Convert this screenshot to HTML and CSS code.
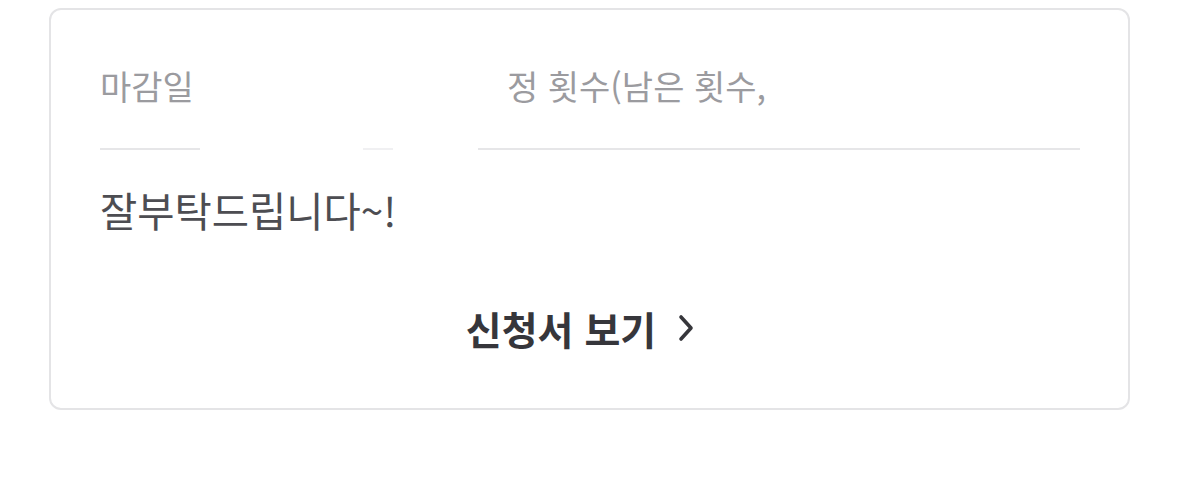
FILE: index.html
```html
<!DOCTYPE html>
<html lang="ko">
<head>
<meta charset="utf-8">
<title>신청서</title>
<link rel="stylesheet" href="styles.css">
</head>
<body>
<div class="card">
  <div class="labels">
    <div class="label label-first">마감일</div>
    <div class="label label-second">정 횟수(남은 횟수,</div>
  </div>
  <div class="divider"></div>
  <p class="message">잘부탁드립니다~!</p>
  <a class="view-link" href="#">신청서 보기 <svg class="chev" viewBox="0 0 16 28" width="16" height="28" aria-hidden="true"><path d="M3 3 L13 14 L3 25" fill="none" stroke="currentColor" stroke-width="3.6" stroke-linecap="round" stroke-linejoin="round"/></svg></a>
</div>
</body>
</html>
```
FILE: styles.css
```css
html, body {
  margin: 0;
  padding: 0;
  background: #ffffff;
}
body {
  font-family: "Noto Sans CJK KR", "Noto Sans", sans-serif;
  padding-top: 8px;
}
.card {
  box-sizing: border-box;
  margin-left: 49px;
  width: 1081px;
  height: 402px;
  border: 2px solid #e4e4e6;
  border-radius: 12px;
  padding: 56px 48px 0 49px;
  display: flex;
  flex-direction: column;
}
.labels {
  display: flex;
  height: 40px;
  align-items: center;
}
.label {
  font-size: 34px;
  line-height: 40px;
  color: #9b9b9f;
  white-space: nowrap;
}
.label-first {
  width: 407px;
}
.divider {
  margin-top: 42px;
  height: 2px;
  background: linear-gradient(to right,
    #e6e6e8 0, #e6e6e8 100px,
    transparent 100px, transparent 263px,
    #f0f0f2 263px, #f0f0f2 293px,
    transparent 293px, transparent 378px,
    #e6e6e8 378px, #e6e6e8 100%);
}
.message {
  margin: 38px 0 0 0;
  font-size: 40.5px;
  line-height: 44px;
  color: #4d4d52;
}
.view-link {
  margin-top: 74px;
  align-self: center;
  display: flex;
  align-items: center;
  gap: 22px;
  padding-right: 20px;
  font-size: 39px;
  line-height: 44px;
  font-weight: 700;
  color: #36363b;
  text-decoration: none;
}
.chev {
  display: block;
}
```
